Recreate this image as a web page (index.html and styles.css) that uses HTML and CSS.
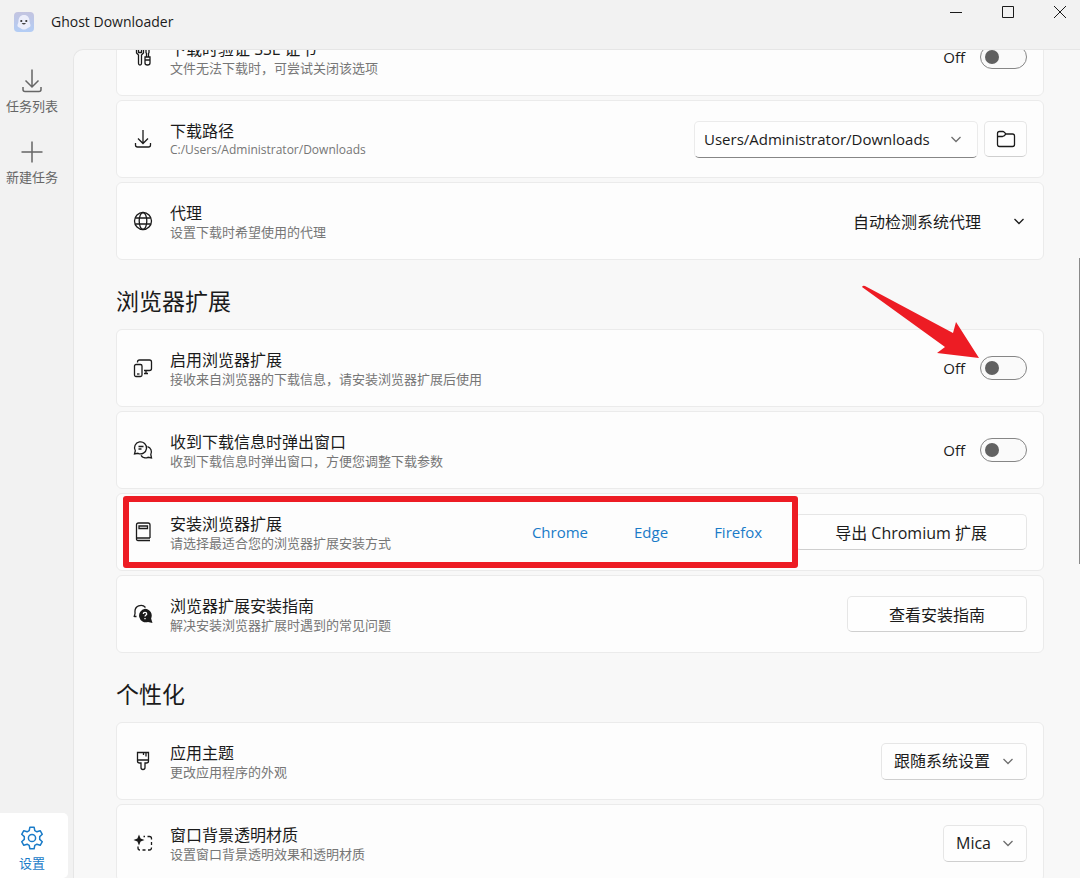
FILE: index.html
```html
<!DOCTYPE html>
<html lang="zh-CN">
<head>
<meta charset="UTF-8">
<meta name="viewport" content="width=device-width, initial-scale=1.0">
<title>Ghost Downloader</title>
<link rel="stylesheet" href="styles.css">
</head>
<body>
  <header class="titlebar">
    <svg class="app-logo" viewBox="0 0 20 20">
      <defs>
        <linearGradient id="logoBg" x1="0" y1="0" x2="0" y2="1">
          <stop offset="0" stop-color="#c3c4e0"/>
          <stop offset="1" stop-color="#b3cdf5"/>
        </linearGradient>
      </defs>
      <rect width="20" height="20" rx="4" fill="url(#logoBg)"/>
      <path d="M10 3c-3.600 0-5.500 2.700-5.500 6 0 2-1.300 3.500-1 5 .3 1.500 2 1.300 3 2.200 1 .8 2.200 1.300 3.500 1.300s2.500-.5 3.500-1.300c1-.9 2.700-.7 3-2.200.3-1.500-1-3-1-5 0-3.300-1.900-6-5.500-6z" fill="#eceefb"/>
      <circle cx="7.300" cy="9" r="1.100" fill="#333"/>
      <circle cx="12.300" cy="9" r="1.100" fill="#333"/>
      <path d="M7.600 11q2.200 3 4.400 0z" fill="#444"/>
    </svg>
    <span class="app-name">Ghost Downloader</span>
    <div class="window-controls">
      <button type="button" aria-label="最小化"><svg viewBox="0 0 14 14"><path d="M1 7.500h12"/></svg></button>
      <button type="button" aria-label="最大化"><svg viewBox="0 0 14 14"><path d="M1.500 1.500h11v11h-11z"/></svg></button>
      <button type="button" aria-label="关闭"><svg viewBox="0 0 14 14"><path d="M1 1l12 12M13 1L1 13"/></svg></button>
    </div>
  </header>

  <div class="layout">
    <nav class="sidebar">
      <a class="nav-item" href="#tasks">
        <svg viewBox="0 0 24 24"><path d="M12 .500v17M5.500 11.500l6.500 6.500 6.500-6.500M3 18v2.500q0 2 2 2h14q2 0 2-2V18"/></svg>
        <span>任务列表</span>
      </a>
      <a class="nav-item" href="#new">
        <svg viewBox="0 0 24 24"><path d="M12 1.500v21M1.500 12h21"/></svg>
        <span>新建任务</span>
      </a>
      <a class="nav-item nav-bottom active" href="#settings">
        <svg viewBox="0 0 24 24"><circle cx="12" cy="12" r="3.600"/><path stroke-linejoin="round" d="M9.900 1.200h4.200l.7 3.400 2.100 1.200 3.300-1.100 2.100 3.600-2.600 2.300v2.800l2.600 2.300-2.100 3.600-3.300-1.100-2.100 1.200-.7 3.400H9.900l-.7-3.400-2.100-1.200-3.300 1.100-2.100-3.600 2.600-2.300v-2.800L1.700 8.300l2.100-3.600 3.300 1.100 2.100-1.200z"/></svg>
        <span>设置</span>
      </a>
    </nav>

    <main class="content">
      <div class="settings">
        <section class="group">
          <div class="card">
            <svg class="icon" viewBox="0 0 20 20"><path d="M3.500 2v4l2 2v8.500q0 1.500 1.500 1.500t1.500-1.500V8l2-2V2M5.500 2v3.500h3V2M13 1.500h3v4l-.5 1V10M13 1.500v4l.5 1V10M12 10h5v6q0 2-2.500 2T12 16zM12 13h5"/></svg>
            <div class="info">
              <h3>下载时验证 SSL 证书</h3>
              <p>文件无法下载时，可尝试关闭该选项</p>
            </div>
            <label class="switch">Off <input type="checkbox"></label>
          </div>
          <div class="card">
            <svg class="icon" viewBox="0 0 20 20"><path d="M10 1v13M5 9.500l5 5 5-5M2.500 14v2q0 2 2 2h11q2 0 2-2v-2"/></svg>
            <div class="info">
              <h3>下载路径</h3>
              <p class="path">C:/Users/Administrator/Downloads</p>
            </div>
            <div class="path-picker">
              <div class="combo">
                <input type="text" value="Users/Administrator/Downloads" aria-label="下载路径">
                <button type="button" aria-label="展开历史路径"><svg class="chevron" viewBox="0 0 12 12"><path d="M1.500 4L6 8.500 10.500 4"/></svg></button>
              </div>
              <button type="button" class="btn btn-icon" aria-label="选择文件夹">
                <svg class="icon" viewBox="0 0 20 20"><path d="M1.500 4.500q0-2 2-2h3.300q.8 0 1.400.6L10 5h6.500q2 0 2 2v8.500q0 2-2 2h-13q-2 0-2-2zM1.500 7.500h5q.8 0 1.400-.6L10 5"/></svg>
              </button>
            </div>
          </div>
          <div class="card">
            <svg class="icon" viewBox="0 0 20 20"><circle cx="10" cy="10" r="8.500"/><ellipse cx="10" cy="10" rx="3.800" ry="8.500"/><path d="M2.200 7h15.600M2.200 13h15.600"/></svg>
            <div class="info">
              <h3>代理</h3>
              <p>设置下载时希望使用的代理</p>
            </div>
            <button type="button" class="expander">自动检测系统代理
              <svg class="chevron" viewBox="0 0 12 12"><path d="M1.500 4L6 8.500 10.500 4"/></svg>
            </button>
          </div>
        </section>

        <h2>浏览器扩展</h2>
        <section class="group">
          <div class="card">
            <svg class="icon" viewBox="0 0 20 20"><path d="M4.500 4.500V4q0-2 2-2h10q2 0 2 2v6.500q0 2-2 2H11M13 12.500V15M11 15.500h4"/><rect x="1.500" y="6.500" width="7.500" height="12" rx="1.500"/><path d="M4 16h2.500"/></svg>
            <div class="info">
              <h3>启用浏览器扩展</h3>
              <p>接收来自浏览器的下载信息，请安装浏览器扩展后使用</p>
            </div>
            <label class="switch">Off <input type="checkbox"></label>
            <svg class="arrow" viewBox="0 0 120 76"><path d="M2 3q1-2 3-1l88 47 3-11 23 36-42-5 8-6z"/></svg>
          </div>
          <div class="card">
            <svg class="icon" viewBox="0 0 20 20"><path d="M1.500 14l.8-3.200A6 6 0 1 1 5 13.300zM5.500 6.500h5M5.500 9h3"/><path d="M14.500 6.700a5.500 5.500 0 0 1 3.300 7.800l.7 3.500-3.500-.7a5.500 5.500 0 0 1-7-2"/></svg>
            <div class="info">
              <h3>收到下载信息时弹出窗口</h3>
              <p>收到下载信息时弹出窗口，方便您调整下载参数</p>
            </div>
            <label class="switch">Off <input type="checkbox"></label>
          </div>
          <div class="card">
            <svg class="icon" viewBox="0 0 20 20"><path d="M17 16H3.500M17 18.500H5q-1.500 0-1.500-1.500V3q0-2 2-2H15q2 0 2 2v13M6 4h8.500v2.500H6z"/></svg>
            <div class="info">
              <h3>安装浏览器扩展</h3>
              <p>请选择最适合您的浏览器扩展安装方式</p>
            </div>
            <div class="install">
              <a href="#chrome">Chrome</a>
              <a href="#edge">Edge</a>
              <a href="#firefox">Firefox</a>
            </div>
            <button type="button" class="btn">导出 Chromium 扩展</button>
            <div class="highlight"></div>
          </div>
          <div class="card">
            <svg class="icon" viewBox="0 0 20 20"><path d="M2 10V8a6 6 0 0 1 10.500-4.500M1 13l1-3M1 12.500h2.500"/><path class="solid" d="M12 4.800a6.800 6.800 0 0 1 6.100 9.700l1.400 4.500-4.500-1A6.800 6.800 0 1 1 12 4.800z"/><path class="knockout" d="M10.300 10q0-1.600 1.700-1.600t1.700 1.500c0 1.200-1.700 1.200-1.700 2.600M12 14v1.200"/></svg>
            <div class="info">
              <h3>浏览器扩展安装指南</h3>
              <p>解决安装浏览器扩展时遇到的常见问题</p>
            </div>
            <button type="button" class="btn">查看安装指南</button>
          </div>
        </section>

        <h2>个性化</h2>
        <section class="group">
          <div class="card">
            <svg class="icon" viewBox="0 0 20 20"><path d="M4.500 1.500h11V10q0 2-2 2H12v4.500q0 2-2 2t-2-2V12H6.500q-2 0-2-2zM4.500 9h11M13 1.500v4M10.500 1.500V4"/></svg>
            <div class="info">
              <h3>应用主题</h3>
              <p>更改应用程序的外观</p>
            </div>
            <div class="dropdown">
              <select aria-label="应用主题"><option>跟随系统设置</option></select>
              <svg class="chevron" viewBox="0 0 12 12"><path d="M1.500 4L6 8.500 10.500 4"/></svg>
            </div>
          </div>
          <div class="card">
            <svg class="icon" viewBox="0 0 20 20"><path class="solid" d="M6 1.500l1.600 3.900L11.500 7 7.600 8.600 6 12.500 4.400 8.600.5 7l3.900-1.600z" stroke-linejoin="round"/><path d="M10.500 3.500H12M14.500 3.500h2q2 0 2 2v1M18.500 9v3M18.500 14.500q0 2.500-2 2.500h-1.500M12.500 17h-3M7 17q-2 0-2-2v-1.500"/></svg>
            <div class="info">
              <h3>窗口背景透明材质</h3>
              <p>设置窗口背景透明效果和透明材质</p>
            </div>
            <div class="dropdown">
              <select aria-label="窗口背景透明材质"><option>Mica</option></select>
              <svg class="chevron" viewBox="0 0 12 12"><path d="M1.500 4L6 8.500 10.500 4"/></svg>
            </div>
          </div>
        </section>
      </div>
      <div class="scroll-thumb"></div>
    </main>
  </div>
</body>
</html>
```
FILE: styles.css
```css
* {
  box-sizing: border-box;
}
body {
  margin: 0;
  height: 100vh;
  display: flex;
  flex-direction: column;
  overflow: hidden;
  background: #f2f2f2;
  color: #1b1b1b;
  font-family: "Open Sans", "Noto Sans CJK SC", sans-serif;
  font-size: 15px;
}
button, input, select {
  font: inherit;
  color: inherit;
}
button {
  padding: 0;
  border: none;
  background: none;
}
a {
  text-decoration: none;
}
h2, h3, p {
  margin: 0;
  font-weight: 400;
}
svg {
  display: block;
  flex: none;
  fill: none;
  stroke: currentColor;
}

/* title bar */
.titlebar {
  display: flex;
  align-items: center;
  flex: none;
  height: 49px;
  padding-left: 14px;
}
.app-logo {
  width: 20px;
  height: 20px;
  margin-right: 17px;
  stroke: none;
}
.app-name {
  flex: 1;
  font-size: 14px;
  line-height: 20px;
}
.titlebar .app-logo, .titlebar .app-name {
  margin-bottom: 5px;
}
.window-controls {
  display: flex;
  gap: 12px;
  align-self: flex-start;
}
.window-controls button {
  width: 40px;
  height: 24px;
  display: flex;
  align-items: center;
  justify-content: center;
}
.window-controls svg {
  width: 14px;
  height: 14px;
}

.layout {
  display: flex;
  flex: 1;
  min-height: 0;
}

/* sidebar */
.sidebar {
  display: flex;
  flex-direction: column;
  gap: 6px;
  width: 68px;
  margin-right: 5px;
  padding-top: 7px;
}
.nav-item {
  display: flex;
  flex-direction: column;
  align-items: center;
  gap: 4px;
  padding: 13px 4px 6px 0;
  border-radius: 0 5px 5px 0;
  color: #666;
  font-size: 13px;
  line-height: 18px;
}
.nav-item svg {
  width: 24px;
  height: 24px;
  stroke-width: 1.5;
}
.nav-bottom {
  margin-top: auto;
}
.nav-item.active {
  background: #fff;
  color: #1a7bc8;
}

/* settings page */
.content {
  position: relative;
  flex: 1;
  min-width: 0;
  overflow: hidden;
  background: #f8f8f8;
  border: 1px solid #e6e6e6;
  border-width: 1px 0 0 1px;
  border-radius: 10px 0 0 0;
}
.settings {
  margin-top: -32px;
  padding: 0 36px 0 42px;
}
.scroll-thumb {
  position: absolute;
  top: 208px;
  right: 0;
  width: 1px;
  height: 306px;
  background: #8a8a8a;
}
h2 {
  padding: 25px 0 12px;
  font-size: 23px;
  line-height: 32px;
}
.group {
  display: flex;
  flex-direction: column;
  gap: 4px;
}
.card {
  position: relative;
  display: flex;
  align-items: center;
  height: 78px;
  padding: 0 16px;
  background: #fdfdfd;
  border: 1px solid #ebebeb;
  border-radius: 6px;
}
.icon {
  width: 20px;
  height: 20px;
  stroke-width: 1.3;
}
.info {
  flex: 1;
  margin-left: 17px;
  padding-top: 2px;
}
.info h3 {
  font-size: 16px;
  line-height: 20px;
}
.info p {
  color: #767676;
  font-size: 13px;
  line-height: 18px;
}
.info .path {
  font-size: 12px;
}
.solid {
  fill: currentColor;
  stroke: none;
}
.knockout {
  stroke: #fff;
}
.chevron {
  width: 12px;
  height: 12px;
  stroke-width: 1.3;
}

/* controls */
.switch {
  display: flex;
  align-items: center;
  gap: 15px;
}
.switch input {
  appearance: none;
  width: 47px;
  height: 24px;
  margin: 0;
  padding: 4px;
  border: 1px solid #868686;
  border-radius: 12px;
  background: #fafafa;
}
.switch input::before {
  content: "";
  display: block;
  width: 14px;
  height: 14px;
  border-radius: 50%;
  background: #616161;
}
.btn {
  min-width: 180px;
  height: 36px;
  padding: 0 39px;
  border: 1px solid #e6e6e6;
  border-bottom-color: #cfcfcf;
  border-radius: 5px;
  background: #fefefe;
  font-size: 16px;
}
.btn-icon {
  display: flex;
  align-items: center;
  justify-content: center;
  min-width: 0;
  width: 43px;
  padding: 0;
}
.path-picker {
  display: flex;
  gap: 6px;
}
.combo {
  display: flex;
  width: 284px;
  height: 37px;
  border: 1px solid #ebebeb;
  border-bottom-color: #868686;
  border-radius: 5px;
  background: #fefefe;
}
.combo input {
  flex: 1;
  min-width: 0;
  padding: 0 0 0 9px;
  border: none;
  background: none;
}
.combo button {
  display: flex;
  align-items: center;
  justify-content: center;
  width: 42px;
  color: #6e6e6e;
}
.expander {
  display: flex;
  align-items: center;
  gap: 32px;
  padding-right: 2px;
  font-size: 16px;
}
.install {
  display: flex;
  gap: 46px;
  margin-right: 33px;
}
.install a {
  color: #1a7bc8;
}
.dropdown {
  position: relative;
}
.dropdown select {
  appearance: none;
  height: 37px;
  padding: 0 35px 0 12px;
  border: 1px solid #e6e6e6;
  border-bottom-color: #cfcfcf;
  border-radius: 5px;
  background: #fefefe;
  font-size: 16px;
}
.dropdown .chevron {
  position: absolute;
  top: 12px;
  right: 13px;
  color: #6e6e6e;
  pointer-events: none;
}

/* red markup on top of the cards */
.arrow {
  position: absolute;
  top: -46px;
  right: 63px;
  z-index: 1;
  width: 120px;
  height: 76px;
  fill: #ed1c24;
  stroke: none;
}
.highlight {
  position: absolute;
  top: 2px;
  right: 245px;
  bottom: 2px;
  left: 6px;
  border: 6px solid #ed1c24;
  border-radius: 3px;
  pointer-events: none;
}
```
